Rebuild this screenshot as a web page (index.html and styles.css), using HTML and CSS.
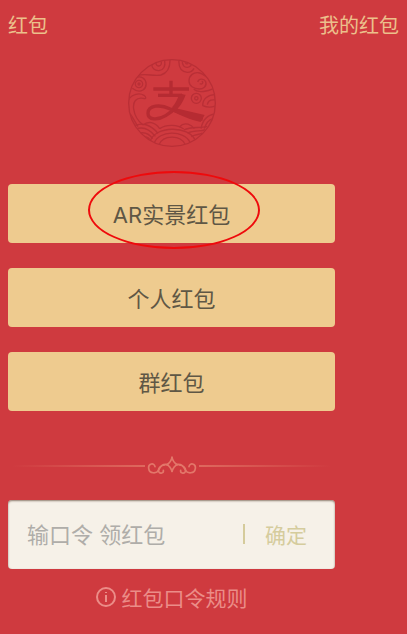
FILE: index.html
```html
<!DOCTYPE html>
<html lang="zh-CN">
<head>
<meta charset="utf-8">
<meta name="viewport" content="width=device-width, initial-scale=1">
<title>红包</title>
<link rel="stylesheet" href="styles.css">
</head>
<body>
<header class="topbar">
  <a class="topbar-link" href="#home">红包</a>
  <a class="topbar-link" href="#mine">我的红包</a>
</header>
<main class="content">
  <svg class="emblem" viewBox="53 28 264 264" aria-hidden="true">
    <defs><clipPath id="disc"><circle cx="185" cy="160" r="129"/></clipPath></defs>
    <circle class="line" cx="185" cy="160" r="130"/>
    <g class="line" clip-path="url(#disc)">
      <path d="M82 78C105 68 130 82 152 76C172 70 180 54 179 28"/>
      <path d="M124 42C124 56 134 64 146 63C160 61 166 50 163 32"/>
      <path d="M137 34C135 44 140 50 146 49C153 48 155 41 151 31"/>
      <path d="M206 30C204 52 212 66 231 68C240 68 247 64 251 56"/>
      <path d="M216 32C215 47 222 54 232 53C240 51 244 47 244 40"/>
      <path d="M225 34C224 41 228 44 233 42"/>
      <path d="M65 103C68 84 85 77 98 85C111 94 110 113 98 121C87 128 76 124 66 116"/>
      <circle cx="86" cy="103" r="11"/><circle cx="86" cy="103" r="3"/>
      <path d="M262 97C266 86 281 86 286 96C291 109 279 118 267 118C250 118 236 108 236 94C236 77 250 66 268 70C282 73 290 86 303 88"/>
      <path d="M268 102C276 106 281 97 274 94M250 119C264 132 294 124 310 117"/>
      <circle cx="258" cy="146" r="15"/><circle cx="258" cy="146" r="5"/>
      <path d="M277 168C277 147 294 135 314 135M277 168C289 173 302 174 314 169M291 165C293 153 302 149 315 151"/>
      <path d="M54 151C65 132 88 129 101 137C109 143 107 149 99 146C77 142 67 157 70 178C73 200 84 215 98 226"/>
      <path d="M57 190C66 200 75 218 83 231"/>
      <path d="M73 228C93 218 120 223 143 251M75 239C98 229 118 239 135 260M85 251C103 246 117 253 127 267M96 263C108 260 116 264 121 274"/>
      <path d="M98 226C113 214 133 216 148 237M148 237C168 223 202 224 220 238"/>
      <path d="M120 275C131 229 237 225 255 273M132 280C144 242 222 240 239 278M146 285C158 256 210 254 224 284"/>
      <path d="M221 241C242 229 268 237 291 230M232 250C253 240 272 247 284 240M243 261C257 253 266 256 276 250"/>
      <path d="M272 237C277 211 293 195 315 193M282 237C287 220 297 210 308 207M207 232C224 213 244 227 252 237"/>
    </g>
    <g class="mark">
      <path class="bar" d="M129 118H236M182 93V133"/>
      <path class="bar" d="M143 137H215"/>
      <path class="sweep" d="M218 134C209 160 190 184 166 198C145 211 112 213 113 190C114 166 151 164 178 177C204 188 227 198 277 209"/>
      <path class="tail" d="M190 174L283 196L271 217C240 211 210 196 184 184Z"/>
      <path class="tail" d="M205 135H226C219 156 207 174 194 184L185 173C195 161 202 149 205 135Z"/>
    </g>
  </svg>

  <nav class="actions" aria-label="红包">
    <button class="action circled" type="button">AR实景红包</button>
    <button class="action" type="button">个人红包</button>
    <button class="action" type="button">群红包</button>
  </nav>

  <div class="divider">
    <svg class="ornament" viewBox="0 0 150 54" aria-hidden="true">
      <g id="scroll">
        <path d="M75 4C73 14 68 21 59 26C67 29 72 36 75 46"/>
        <path d="M62 26C44 22 40 34 35 42C29 54 7 54 5 37C3 22 22 19 24 32"/>
        <path d="M53 27C40 27 32 39 35 47C39 55 51 51 49 43"/>
      </g>
      <use href="#scroll" transform="matrix(-1 0 0 1 150 0)"/>
    </svg>
  </div>

  <form class="code-form">
    <input class="code-input" type="text" aria-label="红包口令" placeholder="输口令 领红包">
    <button class="confirm" type="button">确定</button>
  </form>

  <a class="rules" href="#rules">
    <svg class="info" viewBox="0 0 20 20" aria-hidden="true">
      <circle cx="10" cy="10" r="9"/>
      <path d="M10 8V15M10 5V6"/>
    </svg>
    红包口令规则
  </a>
</main>
</body>
</html>
```

FILE: styles.css
```css
*,
*::before,
*::after {
  box-sizing: border-box;
}

body {
  margin: 0;
  min-height: 100vh;
  background: #cf3a3f;
  color: #ecc08c;
  font-family: Inter, "Noto Sans CJK SC", sans-serif;
  font-weight: 400;
}

button,
input {
  font: inherit;
}

a {
  color: inherit;
  text-decoration: none;
}

.topbar {
  display: flex;
  justify-content: space-between;
  align-items: center;
  height: 48px;
  padding: 0 8px;
  font-size: 20px;
}

.content {
  display: flex;
  flex-direction: column;
  margin: 11px 72px 0 8px;
}

.emblem {
  align-self: center;
  width: 88px;
  height: 88px;
}

.line {
  fill: none;
  stroke: #b92f36;
  stroke-width: 4;
}

.bar,
.sweep {
  fill: none;
  stroke: #b62b32;
  stroke-width: 10;
}

.tail {
  fill: #b62b32;
}

.actions {
  display: flex;
  flex-direction: column;
  gap: 25px;
  margin-top: 37px;
}

.action {
  position: relative;
  height: 59px;
  padding: 0 0 2px;
  border: 0;
  border-radius: 4px;
  background: #eecb8f;
  color: #5f5745;
  font-size: 22px;
}

.circled::after {
  content: "";
  position: absolute;
  top: -13px;
  left: calc(50% - 84px);
  width: 172px;
  height: 78px;
  border: 2px solid #ee0a0c;
  border-radius: 50%;
}

.divider {
  display: flex;
  align-items: center;
  gap: 2px;
  height: 18px;
  margin: 45px 4px 0;
}

.divider::before,
.divider::after {
  content: "";
  flex: 1;
  height: 2px;
  margin-top: 2px;
  background: linear-gradient(to right, transparent, #de695e);
}

.divider::after {
  background: linear-gradient(to left, transparent, #de695e);
}

.ornament {
  width: 50px;
  height: 18px;
  fill: none;
  stroke: #e3776a;
  stroke-width: 5;
  stroke-linecap: round;
}

.code-form {
  display: flex;
  align-items: center;
  height: 69px;
  margin-top: 26px;
  padding: 0 28px 0 19px;
  border-radius: 4px;
  background: #f6f1e8;
  box-shadow: inset 0 1px 2px #8f7d70;
}

.code-input {
  flex: 1;
  min-width: 0;
  padding: 0;
  border: 0;
  outline: 0;
  background: transparent;
  color: #57503f;
  font-size: 22px;
}

.code-input::placeholder {
  color: #afada9;
  opacity: 1;
}

.confirm {
  display: flex;
  align-items: center;
  gap: 20px;
  padding: 0 0 2px;
  border: 0;
  background: transparent;
  color: #d5cc9d;
  font-size: 21px;
}

.confirm::before {
  content: "";
  width: 2px;
  height: 20px;
  background: #d5cb9b;
}

.rules {
  display: flex;
  align-items: center;
  align-self: center;
  gap: 6px;
  height: 30px;
  margin-top: 13px;
  color: #eb8d88;
  font-size: 21px;
}

.info {
  width: 20px;
  height: 20px;
  fill: none;
  stroke: currentColor;
  stroke-width: 2;
}
```
